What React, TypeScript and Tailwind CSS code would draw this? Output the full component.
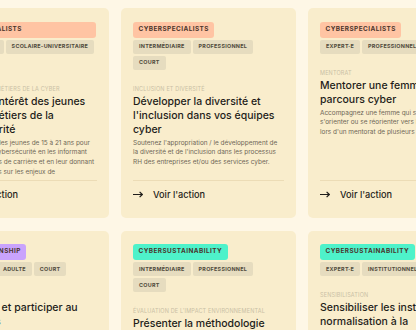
type Action = {
  pill: string
  pillColor: string
  pillWidth?: string
  tags: string[][]
  category: string
  title: string
  text: string
}

const actions: Action[] = [
  {
    pill: 'CYBERSPECIALISTS',
    pillColor: 'bg-[#ffc4a3]',
    pillWidth: 'w-[150px]',
    tags: [['INTERMÉDIAIRE', 'SCOLAIRE-UNIVERSITAIRE'], ['COURT']],
    category: 'Promotion des métiers de la cyber',
    title: "Susciter l'intérêt des jeunes\npour les métiers de la\ncybersécurité",
    text: 'Responsabilisez des jeunes de 15 à 21 ans pour\nle secteur de la cybersécurité en les informant\nsur les débouchés de carrière et en leur donnant\ndes clés pratiques sur les enjeux de',
  },
  {
    pill: 'CYBERSPECIALISTS',
    pillColor: 'bg-[#ffc4a3]',
    tags: [['INTERMÉDIAIRE', 'PROFESSIONNEL'], ['COURT']],
    category: 'Inclusion et diversité',
    title: "Développer la diversité et\nl'inclusion dans vos équipes\ncyber",
    text: "Soutenez l'appropriation / le développement de\nla diversité et de l'inclusion dans les processus\nRH des entreprises et/ou des services cyber.",
  },
  {
    pill: 'CYBERSPECIALISTS',
    pillColor: 'bg-[#ffc4a3]',
    tags: [['EXPERT·E', 'PROFESSIONNEL']],
    category: 'Mentorat',
    title: 'Mentorer une femme dans son\nparcours cyber',
    text: "Accompagnez une femme qui souhaite\ns'orienter ou se réorienter vers la cyber\nlors d'un mentorat de plusieurs mois.",
  },
  {
    pill: 'CYBERCITIZENSHIP',
    pillColor: 'bg-[#c9a3fc]',
    tags: [['DÉBUTANT·E', 'ADULTE', 'COURT']],
    category: 'Événement',
    title: "S'informer et participer au\nCybermois",
    text: 'Participez aux événements organisés\npendant le mois de la cybersécurité.',
  },
  {
    pill: 'CYBERSUSTAINABILITY',
    pillColor: 'bg-[#4ef2ca]',
    tags: [['INTERMÉDIAIRE', 'PROFESSIONNEL'], ['COURT']],
    category: "Évaluation de l'impact environnemental",
    title: 'Présenter la méthodologie\nd’évaluation de l’impact\nenvironnemental',
    text: 'Présentez la méthodologie aux équipes\ntechniques et métiers.',
  },
  {
    pill: 'CYBERSUSTAINABILITY',
    pillColor: 'bg-[#4ef2ca]',
    tags: [['EXPERT·E', 'INSTITUTIONNEL']],
    category: 'Sensibilisation',
    title: 'Sensibiliser les instances de\nnormalisation à la\ncybersécurité durable',
    text: 'Portez les enjeux environnementaux\nauprès des instances de normalisation.',
  },
]

const Arrow = () => (
  <svg width="10" height="7" viewBox="0 0 10 7" fill="none" className="shrink-0">
    <path d="M0 3.5H9.3M6.6 0.9L9.3 3.5L6.6 6.1" stroke="#1f1d1a" strokeWidth="1.2" />
  </svg>
)

const ActionCard = ({ action }: { action: Action }) => {
  return (
    <div className="flex flex-col rounded-[5px] bg-[#f9edcc] px-3 pt-[13.5px] pb-[17px]">
      <div className="flex flex-col gap-[2px]">
        <div className="flex">
          <span
            className={`flex h-[16px] items-center whitespace-nowrap rounded-[3px] px-[5.5px] text-[6.4px] font-bold tracking-[0.07em] text-[#4a352c] ${action.pillColor} ${action.pillWidth ?? ''}`}
          >
            {action.pill}
          </span>
        </div>
        {action.tags.map((row, i) => (
          <div key={i} className="flex gap-[2px]">
            {row.map((tag) => (
              <span
                key={tag}
                className="flex h-[14px] items-center whitespace-nowrap rounded-[2px] bg-[#e6dcbf] px-[6px] text-[5.4px] font-bold tracking-[0.05em] text-[#514b3d]"
              >
                {tag}
              </span>
            ))}
          </div>
        ))}
      </div>

      <p className="mt-[15px] whitespace-nowrap text-[5.5px] uppercase leading-[8px] tracking-[0.03em] text-[#c9bfa5]">
        {action.category}
      </p>
      <h3 className="mt-[2px] whitespace-pre text-[10.5px] font-medium leading-[14px] text-[#1f1d1a]">
        {action.title}
      </h3>
      <p className="mt-[2px] whitespace-pre text-[6.45px] leading-[9.8px] text-[#6f6757]">
        {action.text}
      </p>

      <div className="mt-auto pt-[2px]">
        <div className="flex items-center gap-[10px] border-t border-[#ecdcb6] pt-[8px]">
          <Arrow />
          <span className="text-[9.2px] font-medium leading-[12px] text-[#1f1d1a]">Voir l'action</span>
        </div>
      </div>
    </div>
  )
}

export default function App() {
  return (
    <div className="h-[330px] w-[416px] overflow-hidden bg-[#fef7e6] font-['Inter',sans-serif]">
      <div className="ml-[-66px] grid w-max grid-cols-[174.5px_174.5px_174.5px] gap-x-[12.5px] gap-y-[13px] pt-2">
        {actions.map((action, index) => (
          <ActionCard key={index} action={action} />
        ))}
      </div>
    </div>
  )
}
